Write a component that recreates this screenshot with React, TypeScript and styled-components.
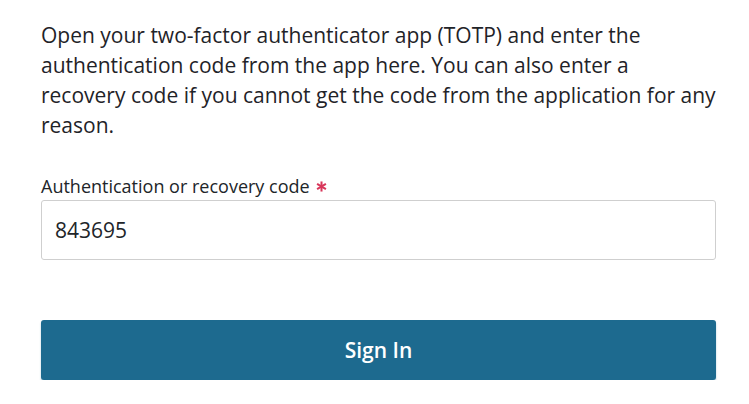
import React from "react";
import styled, { createGlobalStyle } from "styled-components";

const Global = createGlobalStyle`
  html, body { margin: 0; padding: 0; background: #fff; }
  body { font-family: "Open Sans", sans-serif; color: #212529; }
`;

const Page = styled.div`
  width: 675px;
  padding: 20px 0 0 41px;
  display: flex;
  flex-direction: column;
`;

const Intro = styled.p`
  margin: 0;
  font-size: 21px;
  line-height: 30px;
  color: #1f2328;
`;

const Field = styled.div`
  margin-top: 34px;
  display: flex;
  flex-direction: column;
  gap: 2px;
`;

const Label = styled.label`
  display: flex;
  align-items: center;
  gap: 6px;
  font-size: 18px;
  line-height: 24px;
  color: #212529;
`;

const Req = styled.svg`
  width: 11px;
  height: 11px;
  color: #d8365a;
  margin-top: 1px;
`;

const Input = styled.input`
  box-sizing: border-box;
  height: 60px;
  width: 100%;
  border: 1px solid #cfcfcf;
  border-radius: 3px;
  padding: 0 13px;
  font-family: "Open Sans", sans-serif;
  font-size: 21px;
  color: #212529;
  outline: none;
`;

const Button = styled.button`
  margin-top: 60px;
  height: 60px;
  width: 100%;
  border: none;
  border-radius: 3px;
  background: #1d6a8f;
  color: #fff;
  font-family: "Open Sans", sans-serif;
  font-weight: 600;
  font-size: 21px;
  box-shadow: 0 2px 2px rgba(29, 106, 143, 0.35);
  cursor: pointer;
`;

export default function App() {
  return (
    <>
      <Global />
      <Page>
        <Intro>
          Open your two-factor authenticator app (TOTP) and enter the
          authentication code from the app here. You can also enter a recovery
          code if you cannot get the code from the application for any reason.
        </Intro>
        <Field>
          <Label>
            Authentication or recovery code
            <Req viewBox="0 0 12 12" aria-hidden="true">
              <g stroke="currentColor" strokeWidth="2.2" strokeLinecap="butt">
                <line x1="6" y1="0.5" x2="6" y2="11.5" />
                <line x1="1.2" y1="3.2" x2="10.8" y2="8.8" />
                <line x1="1.2" y1="8.8" x2="10.8" y2="3.2" />
              </g>
            </Req>
          </Label>
          <Input defaultValue="843695" />
        </Field>
        <Button>Sign In</Button>
      </Page>
    </>
  );
}
